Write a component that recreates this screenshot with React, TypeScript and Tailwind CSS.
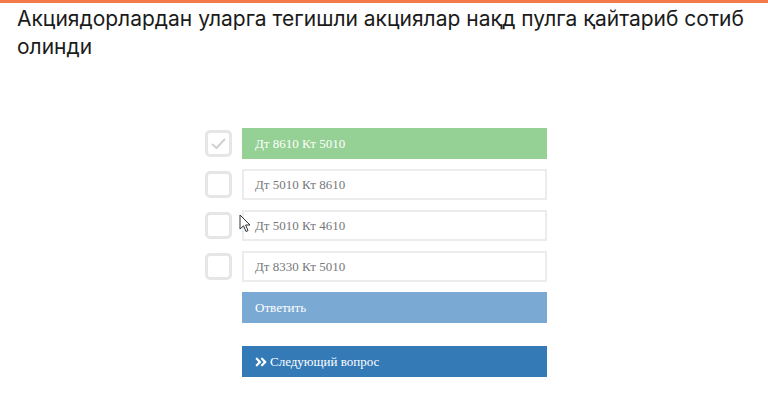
import React from "react";
import { FaAngleDoubleRight } from "react-icons/fa";

const options = [
  { text: "Дт 8610 Кт 5010", correct: true },
  { text: "Дт 5010 Кт 8610", correct: false },
  { text: "Дт 5010 Кт 4610", correct: false },
  { text: "Дт 8330 Кт 5010", correct: false },
];

function Check({ checked }: { checked: boolean }) {
  return (
    <div className="w-[27px] h-[27px] rounded-[5px] border-[3px] border-[#e6e6e6] bg-white flex items-center justify-center shrink-0">
      {checked && (
        <svg width="15" height="12" viewBox="0 0 15 12" fill="none">
          <path d="M1.5 6.5 L5.5 10 L13.5 1.5" stroke="#d0d0d0" strokeWidth="2" strokeLinecap="round" strokeLinejoin="round" />
        </svg>
      )}
    </div>
  );
}

export default function App() {
  return (
    <div className="relative w-[768px] h-[406px] bg-white overflow-hidden">
      <div className="h-[3px] bg-[#f47a4a]" />
      <div
        className="pl-[17px] pr-2 pt-[2px] text-[21px] leading-[28px] text-[#1b1b1b]"
        style={{ fontFamily: "Inter, 'Noto Sans', sans-serif" }}
      >
        Акциядорлардан уларга тегишли акциялар нақд пулга қайтариб сотиб олинди
      </div>
      <div
        className="ml-[205px] mt-[67px] flex flex-col gap-[10px] text-[13px]"
        style={{ fontFamily: "'Liberation Serif', serif" }}
      >
        {options.map((o) => (
          <div key={o.text} className="flex items-center gap-[10px]">
            <Check checked={o.correct} />
            {o.correct ? (
              <div className="w-[305px] h-[31px] bg-[#95d195] text-white flex items-center pl-[13px]">
                {o.text}
              </div>
            ) : (
              <div className="w-[305px] h-[31px] bg-white border-2 border-[#ececec] text-[#777777] flex items-center pl-[11px]">
                {o.text}
              </div>
            )}
          </div>
        ))}
        <div className="ml-[37px] w-[305px] h-[31px] bg-[#7aa9d3] text-white flex items-center pl-[13px]">
          Ответить
        </div>
        <div className="ml-[37px] w-[305px] h-[31px] bg-[#337ab7] text-white flex items-center pl-[12px] mt-[13px] gap-[2px]">
          <FaAngleDoubleRight className="w-[14px] h-[14px]" />
          <span>Следующий вопрос</span>
        </div>
      </div>
      <svg className="absolute left-[239px] top-[214px]" width="12" height="19" viewBox="0 0 12 19">
        <path d="M1 1 L1 15 L4.5 11.8 L7 17.5 L9 16.6 L6.6 11 L11 11 Z" fill="white" stroke="#333" strokeWidth="1" strokeLinejoin="round" />
      </svg>
    </div>
  );
}
